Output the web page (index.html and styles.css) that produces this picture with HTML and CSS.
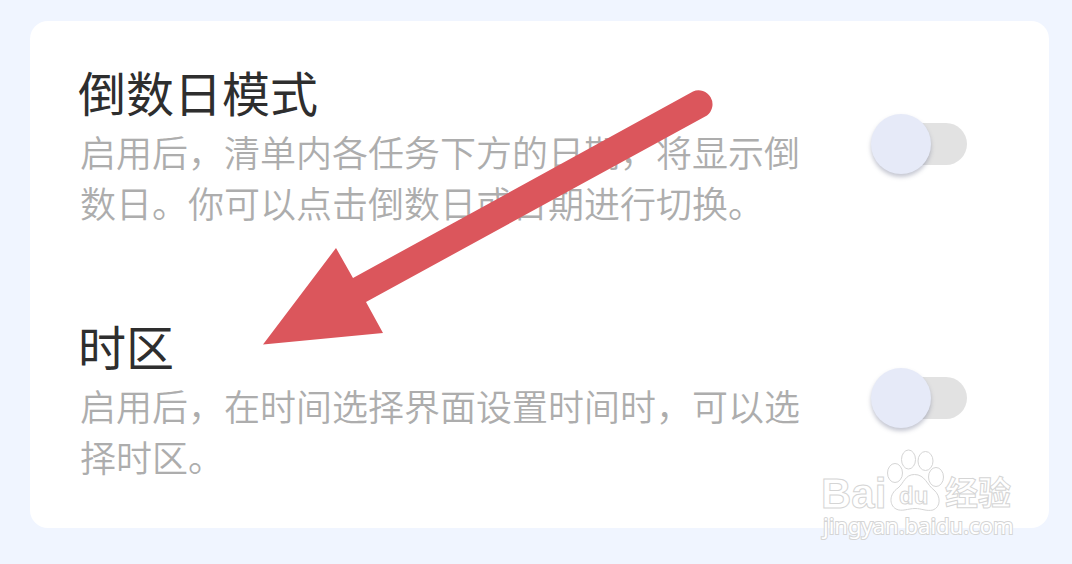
FILE: index.html
```html
<!DOCTYPE html>
<html lang="zh-CN">
<head>
<meta charset="utf-8">
<meta name="viewport" content="width=device-width, initial-scale=1">
<title>设置</title>
<link rel="stylesheet" href="styles.css">
</head>
<body>
<main class="page">
  <section class="card">
    <div class="setting">
      <div class="setting-text">
        <label class="setting-title" for="countdown">倒数日模式</label>
        <p class="setting-desc" id="countdown-desc">启用后，清单内各任务下方的日期，将显示倒数日。你可以点击倒数日或日期进行切换。</p>
      </div>
      <input class="switch" type="checkbox" role="switch" id="countdown" aria-describedby="countdown-desc">
    </div>
    <div class="setting">
      <div class="setting-text">
        <label class="setting-title" for="timezone">时区</label>
        <p class="setting-desc" id="timezone-desc">启用后，在时间选择界面设置时间时，可以选择时区。</p>
      </div>
      <input class="switch" type="checkbox" role="switch" id="timezone" aria-describedby="timezone-desc">
    </div>
  </section>
  <svg class="arrow" width="452" height="256" viewBox="263 89 452 256" aria-hidden="true">
    <path d="M263 344.500 336 248 353 278 693 91.500A14 14 0 0 1 707 115.500L366 302 383 333Z"/>
  </svg>
  <svg class="watermark" width="200" height="96" viewBox="818 446 200 96">
    <g class="mark">
      <ellipse cx="895" cy="473" rx="7.500" ry="9.500"/>
      <ellipse cx="908.500" cy="459.500" rx="7" ry="9.500"/>
      <ellipse cx="925.500" cy="461" rx="7.500" ry="9.500"/>
      <ellipse cx="936" cy="477" rx="7.500" ry="9.500"/>
      <path d="M914.500 474.500C905 474.500 904 483 898 488 889 494 889 505 896 509 902 512 908 508.500 915 508.500 922 508.500 926 511.500 933 510 941 507 941 496 934 490 927 485 925 474.500 914.500 474.500Z"/>
    </g>
    <text class="mark mark-name" x="821" y="508">Bai</text>
    <text class="mark mark-du" x="899" y="504">du</text>
    <text class="mark mark-cn" x="945" y="505">经验</text>
    <text class="mark mark-url" x="823" y="534">jingyan.baidu.com</text>
  </svg>
</main>
</body>
</html>
```

FILE: styles.css
```css
* {
  box-sizing: border-box;
}

body {
  margin: 0;
  background: #f0f5ff;
  font-family: "Noto Sans CJK SC", sans-serif;
}

.page {
  position: relative;
  min-height: 100vh;
  padding: 21px 23px 35px 30px;
}

.card {
  display: flex;
  flex-direction: column;
  gap: 87px;
  padding: 40px 82px 46px 48px;
  border-radius: 18px;
  background: #fff;
}

.setting {
  display: flex;
  align-items: flex-start;
  justify-content: space-between;
  gap: 24px;
}

.setting-text {
  max-width: 724px;
}

.setting-title {
  display: block;
  color: #2e2e2e;
  font-size: 48px;
  line-height: 60px;
}

.setting-desc {
  margin: 5px 0 0;
  padding-left: 2px;
  color: #adadad;
  font-size: 36px;
  font-weight: 350;
  line-height: 51px;
}

.switch {
  appearance: none;
  display: grid;
  align-items: center;
  flex: none;
  width: 96px;
  height: 60px;
  margin: 53px 0 0;
  cursor: pointer;
}

.switch::before,
.switch::after {
  content: "";
  grid-area: 1 / 1;
}

.switch::before {
  justify-self: end;
  width: 84px;
  height: 42px;
  border-radius: 21px;
  background: #e2e2e2;
}

.switch::after {
  width: 60px;
  height: 60px;
  border-radius: 50%;
  background: #e6eaf8;
  box-shadow: 0 3px 4px rgba(90, 95, 125, 0.35);
}

.switch:checked::after {
  justify-self: end;
}

.arrow {
  position: absolute;
  top: 89px;
  left: 263px;
  fill: #db565c;
}

.watermark {
  position: absolute;
  top: 446px;
  right: 54px;
}

.mark {
  fill: #fff;
  stroke: #d5d5d5;
  stroke-width: 1px;
}

.mark-name {
  font: bold 42px "Liberation Sans", sans-serif;
}

.mark-du {
  font: bold 24px "Liberation Sans", sans-serif;
}

.mark-cn {
  font: bold 33px "Noto Sans CJK SC", sans-serif;
}

.mark-url {
  font: 22px "Noto Sans", sans-serif;
  paint-order: stroke;
  stroke-width: 2px;
}
```
